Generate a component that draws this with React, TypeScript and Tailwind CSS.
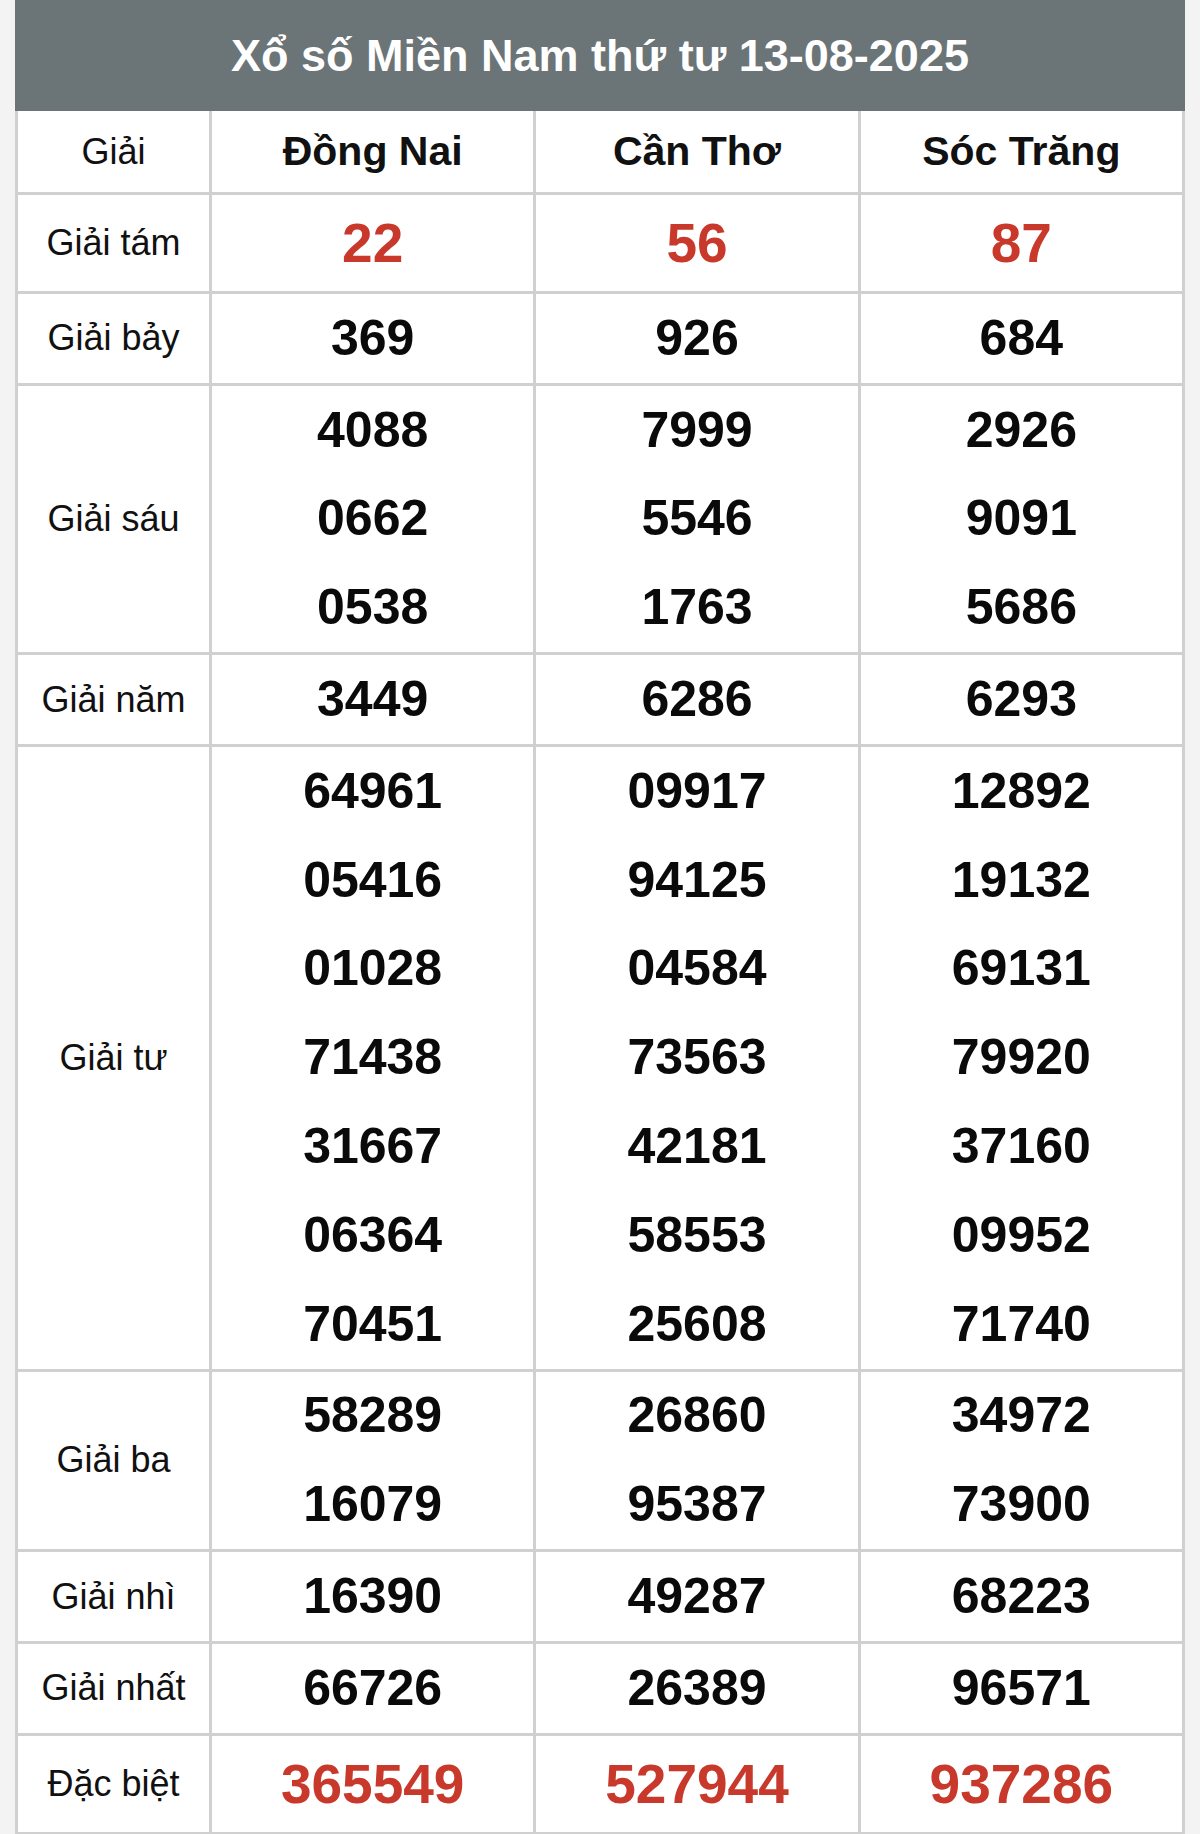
import React from "react";

type Row = { label: string; values: string[][]; red?: boolean; big?: boolean };

const rows: Row[] = [
  { label: "Giải tám", values: [["22"], ["56"], ["87"]], red: true, big: true },
  { label: "Giải bảy", values: [["369"], ["926"], ["684"]] },
  {
    label: "Giải sáu",
    values: [
      ["4088", "0662", "0538"],
      ["7999", "5546", "1763"],
      ["2926", "9091", "5686"],
    ],
  },
  { label: "Giải năm", values: [["3449"], ["6286"], ["6293"]] },
  {
    label: "Giải tư",
    values: [
      ["64961", "05416", "01028", "71438", "31667", "06364", "70451"],
      ["09917", "94125", "04584", "73563", "42181", "58553", "25608"],
      ["12892", "19132", "69131", "79920", "37160", "09952", "71740"],
    ],
  },
  {
    label: "Giải ba",
    values: [
      ["58289", "16079"],
      ["26860", "95387"],
      ["34972", "73900"],
    ],
  },
  { label: "Giải nhì", values: [["16390"], ["49287"], ["68223"]] },
  { label: "Giải nhất", values: [["66726"], ["26389"], ["96571"]] },
  { label: "Đặc biệt", values: [["365549"], ["527944"], ["937286"]], red: true, big: true },
];

export default function App() {
  return (
    <div
      className="w-[1200px] min-h-[1834px] bg-[#f3f3f3] pl-[15px] pr-[15px]"
      style={{ fontFamily: '"Liberation Sans", Arial, sans-serif' }}
    >
      <div className="bg-white">
        <div className="h-[111px] bg-[#6b7477] flex items-center justify-center">
          <h1 className="text-[45px] font-bold text-white leading-none">
            Xổ số Miền Nam thứ tư 13-08-2025
          </h1>
        </div>
        <div className="grid grid-cols-[194px_1fr_1fr_1fr] border-l-[3px] border-[#d0d0d0]">
          <div className="h-[84px] border-r-[3px] border-b-[3px] border-[#d0d0d0] flex items-center justify-center text-[36px] text-[#111]">
            Giải
          </div>
          {["Đồng Nai", "Cần Thơ", "Sóc Trăng"].map((p) => (
            <div
              key={p}
              className="h-[84px] border-r-[3px] border-b-[3px] border-[#d0d0d0] flex items-center justify-center text-[41px] font-bold text-[#111]"
            >
              {p}
            </div>
          ))}
          {rows.map((r) => (
            <React.Fragment key={r.label}>
              <div className="border-r-[3px] border-b-[3px] border-[#d0d0d0] flex items-center justify-center text-[36px] text-[#111]">
                {r.label}
              </div>
              {r.values.map((col, ci) => (
                <div
                  key={ci}
                  className="border-r-[3px] border-b-[3px] border-[#d0d0d0] flex flex-col"
                >
                  {col.map((v, vi) => (
                    <div
                      key={vi}
                      className={
                        r.big
                          ? "h-[96px] flex items-center justify-center text-[55px] font-bold text-[#c9392b]"
                          : "h-[88.8px] flex items-center justify-center text-[50px] font-bold text-[#0a0a0a]"
                      }
                    >
                      {v}
                    </div>
                  ))}
                </div>
              ))}
            </React.Fragment>
          ))}
        </div>
      </div>
    </div>
  );
}
